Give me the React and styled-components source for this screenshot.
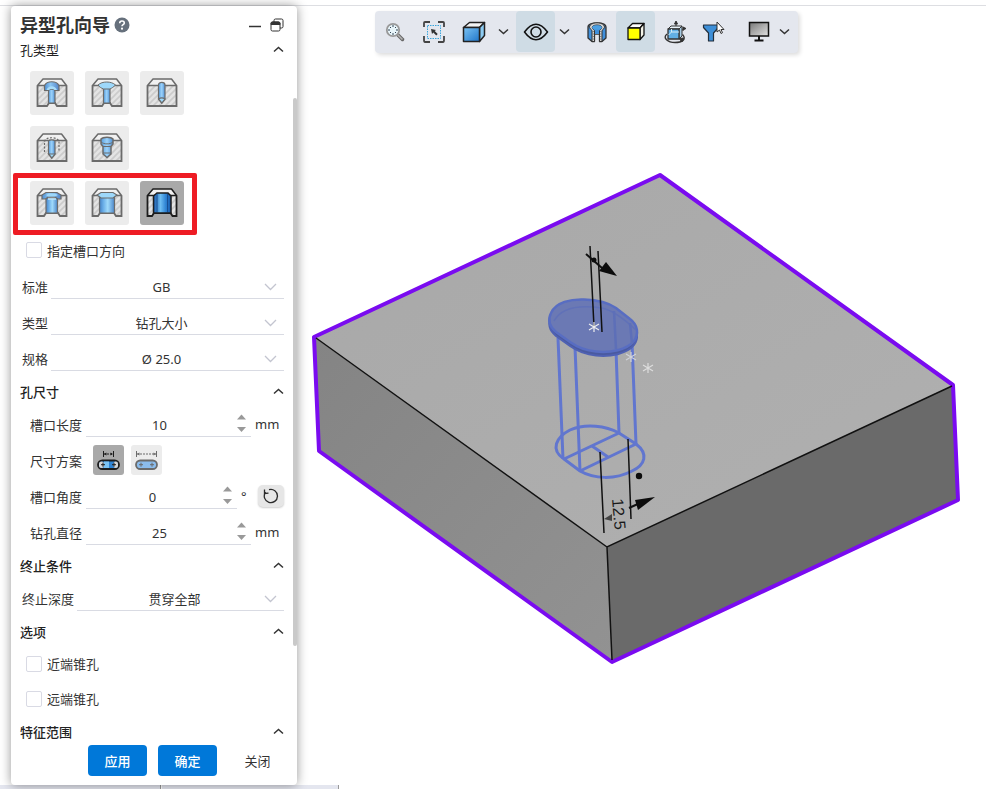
import React, { useState } from "react";
import styled, { createGlobalStyle, css } from "styled-components";

const GlobalStyle = createGlobalStyle`
  *, *::before, *::after { box-sizing: border-box; }
  body { margin: 0; background: #fff; }
  body, button, input, select {
    font-family: "Noto Sans", "Noto Sans CJK SC", sans-serif;
    font-size: 13px;
    color: #333;
  }
  button { border: 0; padding: 0; background: none; cursor: pointer; }
`;

const Screen = styled.div`
  display: flex;
  flex-direction: column;
  height: 100vh;
  overflow: hidden;
`;
const TopEdge = styled.div`
  flex: none;
  height: 6px;
  border-bottom: 1px solid #dddee2;
`;
const Workspace = styled.div`
  display: flex;
  flex: 1;
  min-height: 0;
`;
const BottomTabs = styled.div`
  flex: none;
  display: flex;
  gap: 1px;
  height: 4px;
`;
const BottomTab = styled.div`
  width: ${(p) => (p.$wide ? 177 : 161)}px;
  background: #e4e6ef;
  border-right: 1px solid #999;
`;

const Panel = styled.aside`
  position: relative;
  z-index: 1;
  flex: none;
  display: flex;
  flex-direction: column;
  width: 286px;
  margin-left: 11px;
  background: #fff;
  border-radius: 4px;
  box-shadow: 0 0 11px rgba(0, 0, 0, 0.42);
`;
const TitleBar = styled.header`
  display: flex;
  align-items: center;
  gap: 4px;
  height: 30px;
  padding: 8px 12px 0 9px;
`;
const Title = styled.h1`
  margin: 0;
  font-size: 18px;
  line-height: 22px;
  font-weight: 700;
`;
const TitleButton = styled.button`
  display: flex;
  align-items: center;
  justify-content: center;
  width: 16px;
  height: 16px;
`;
const WindowButtons = styled.div`
  display: flex;
  gap: 6px;
  margin-left: auto;
`;
const PanelBody = styled.div`
  flex: 1;
  min-height: 0;
  overflow: auto;
  scrollbar-width: none;
`;
const ScrollThumb = styled.div`
  position: absolute;
  top: 92px;
  right: 0;
  bottom: 139px;
  width: 4px;
  border-radius: 2px;
  background: #c9c9c9;
`;
const SectionHead = styled.button`
  display: flex;
  align-items: center;
  justify-content: space-between;
  width: 100%;
  height: ${(p) => (p.$first ? 28 : 30)}px;
  padding: 0 13px ${(p) => (p.$first ? 2 : 0)}px 9px;
  font-weight: ${(p) => (p.$first ? 400 : 500)};
  color: #222;
  svg { margin-top: 2px; }
`;
const HoleGrid = styled.div`
  display: flex;
  flex-direction: column;
  align-items: flex-start;
  gap: 11px;
  padding: 7px 0 7px 19px;
`;
const HoleRow = styled.div`
  position: relative;
  display: flex;
  gap: 11px;
  ${(p) =>
    p.$marked &&
    css`
      &::after {
        content: "";
        position: absolute;
        inset: -8px -13px -10px -17px;
        border: 5px solid #ee1c24;
        border-radius: 2px;
        pointer-events: none;
      }
    `}
`;
const IconButton = styled.button`
  display: flex;
  align-items: center;
  justify-content: center;
  width: ${(p) => (p.$small ? 31 : 44)}px;
  height: ${(p) => (p.$small ? 30 : 44)}px;
  border-radius: 3px;
  background: ${(p) => (p.$active ? "#a9a9a9" : "#ececec")};
`;
const CheckLabel = styled.label`
  display: flex;
  align-items: center;
  gap: 5px;
  height: ${(p) => (p.$tall ? 36 : 35)}px;
  padding-left: 15px;
`;
const CheckBox = styled.input`
  appearance: none;
  width: 16px;
  height: 16px;
  margin: 0;
  border: 1px solid #d9dae4;
  border-radius: 2px;
  background: #fff;
  &:checked { background: #0078d9; }
`;
const Row = styled.div`
  display: flex;
  align-items: center;
  gap: ${(p) => (p.$indent ? 4 : 3)}px;
  height: 36px;
  padding: 0 13px 0 ${(p) => (p.$indent ? 19 : 11)}px;
`;
const RowLabel = styled.label`
  flex: none;
`;
const Field = styled.div`
  position: relative;
  flex: 1;
  min-width: 0;
  height: 24px;
  margin-top: 2px;
  border-bottom: 1px solid #d9dbe3;
`;
const Select = styled.select`
  appearance: none;
  width: 100%;
  height: 23px;
  padding: 0 12px 0 0;
  border: 0;
  background: transparent;
  text-align: center;
  text-align-last: center;
`;
const SelectArrow = styled.svg`
  position: absolute;
  right: 7px;
  top: 8px;
  pointer-events: none;
`;
const NumberInput = styled.input`
  width: 100%;
  height: 23px;
  padding: 0 18px 0 0;
  border: 0;
  background: transparent;
  text-align: center;
  outline: 0;
`;
const Spinner = styled.div`
  position: absolute;
  right: 5px;
  top: 1px;
  display: flex;
  flex-direction: column;
  gap: 7px;
`;
const SpinButton = styled.button`
  display: block;
  width: 9px;
  height: 6px;
  svg { display: block; }
`;
const Unit = styled.span`
  flex: none;
  width: ${(p) => (p.$narrow ? 13 : 29)}px;
`;
const ResetButton = styled.button`
  display: flex;
  align-items: center;
  justify-content: center;
  width: 26px;
  height: 22px;
  border-radius: 5px;
  background: #e6e6e6;
  box-shadow: 0 1px 2px rgba(0, 0, 0, 0.2);
`;
const SchemeButtons = styled.div`
  display: flex;
  gap: 7px;
  padding-left: 7px;
`;
const Footer = styled.footer`
  flex: none;
  display: flex;
  justify-content: flex-end;
  gap: 11px;
  height: 41px;
  padding: 1px 10px 9px;
`;
const FooterButton = styled.button`
  width: 59px;
  height: 31px;
  border-radius: 4px;
  ${(p) =>
    p.$primary &&
    css`
      background: #0078d9;
      color: #fff;
      font-weight: 500;
    `}
`;

const Viewport = styled.main`
  flex: 1;
  min-width: 0;
  display: flex;
  flex-direction: column;
  align-items: flex-start;
`;
const Toolbar = styled.div`
  flex: none;
  display: flex;
  margin: 5px 0 0 78px;
  padding-right: 1px;
  height: 42px;
  border-radius: 4px;
  background: #e4e7ee;
  box-shadow: 2px 2px 4px rgba(0, 0, 0, 0.14);
`;
const ToolButton = styled.button`
  display: flex;
  align-items: center;
  justify-content: center;
  width: ${(p) => p.$width || 39}px;
  height: 41px;
  border-radius: 4px;
  background: ${(p) => (p.$active ? "#cfdce5" : "transparent")};
`;
const MenuButton = styled(ToolButton)`
  width: 22px;
  padding-right: 3px;
`;
const ToolGap = styled.span`
  width: 9px;
`;
const ModelCanvas = styled.svg`
  display: block;
  width: 100%;
  flex: 1;
  min-height: 0;
`;

function Chevron({ up, color = "#333", w = 10 }) {
  const h = w / 2;
  return (
    <svg width={w + 2} height={h + 3} fill="none" stroke={color} strokeWidth="1.5">
      <path d={up ? `M1 ${h + 1}L${h + 1} 1.5L${w + 1} ${h + 1}` : `M1 1.5L${h + 1} ${h + 1}L${w + 1} 1.5`} />
    </svg>
  );
}

const holeCuts = {
  cbore: (
    <>
      <path d="M12.500 12h6.500v14h-6.500z" fill="url(#blue)" strokeWidth="1.200" />
      <path d="M8.500 13.500V8.500C11 3.500 20.500 3.500 23 8.500v5h-4c-1-2-5.500-2-6.500 0z" fill="url(#blueWide)" strokeWidth="1.200" />
      <path d="M10.500 13c2-5 8.500-5 10.500 0h-2.500c-1-1.500-4.500-1.500-5.500 0z" fill="#a8dcf8" stroke="none" />
    </>
  ),
  csink: (
    <>
      <path d="M12.500 11h6.500v15h-6.500z" fill="url(#blue)" strokeWidth="1.200" />
      <path d="M7 8c4-4 13.500-4 17.500 0-2 2-3.500 3-5.500 4h-6.500C10 11 8.500 10 7 8z" fill="#9ed8fa" strokeWidth="1" />
    </>
  ),
  drill: (
    <>
      <path d="M12.500 22V8c0-3.500 6.500-3.500 6.500 0v14l-3.200 4z" fill="url(#blue)" strokeWidth="1.200" />
      <path d="M12.500 22c2-1.500 4.500-1.500 6.500 0l-3.200 4z" fill="#9ed8fa" strokeWidth="1.200" />
    </>
  ),
  tap: (
    <>
      <path d="M8.500 20V9.500c1-5 13.500-5 14.500 0V20" fill="none" strokeDasharray="2 1.500" strokeWidth="1.200" />
      <path d="M12.500 22V9c1-1.500 5.500-1.500 6.500 0v13l-3.200 4z" fill="url(#blue)" strokeWidth="1.200" />
      <path d="M12.500 22H19l-3.200 4z" fill="#9ed8fa" strokeWidth="1.200" />
    </>
  ),
  step: (
    <>
      <path d="M10 7c2-2.500 10-2.500 12 0v5l-2 2.500V22l-4 3.500-4-3.500v-7.500L10 12z" fill="url(#blue)" />
      <path d="M10 10c3 2.500 9 2.500 12 0M12 14.500h8M12 21h8" fill="none" strokeWidth="1" />
    </>
  ),
  slotCbore: (
    <>
      <path d="M10 11h11.500v15H10z" fill="url(#blueSlot)" strokeWidth="1.200" />
      <path d="M6 8l4-2.500h11L25 8v4h-3l-3-2h-7l-2.500 2H6z" fill="url(#blueWide)" strokeWidth="1.200" />
      <path d="M10 8l3-1.500h6L22 8l-3 1.500h-7z" fill="#9ed8fa" stroke="none" />
      <path d="M12 12h8" stroke="#bfe6fb" strokeWidth="1.500" />
    </>
  ),
  slotCsink: (
    <>
      <path d="M8.500 10h15v16h-15z" fill="url(#blueSlot)" strokeWidth="1.200" />
      <path d="M6 8l4-2.500h12L26 8l-4 3H10z" fill="#9ed8fa" strokeWidth="1.100" />
    </>
  ),
  slot: (
    <>
      <path d="M7.500 9l3.500-3h11l3 3v17h-17.500z" fill="url(#blueDeep)" />
      <path d="M11 7v18M21.500 7v18" stroke="#174f94" strokeWidth="1" />
    </>
  ),
};
const holeBottoms = {
  cbore: "M1.500 8.500V29H11l2-3h6l2 3h9.500V8.500",
  csink: "M1.500 8.500V29H11l2-3h6l2 3h9.500V8.500",
  slotCbore: "M1.500 8.500V29H8l2-3h12l2 3h6.500V8.500",
  slotCsink: "M1.500 8.500V29H7l2-3h14l2 3h5.500V8.500",
  slot: "M1.500 8.500V29H6l2-3h16.500l2 3h4V8.500",
};

function HoleIcon({ kind, active }) {
  const line = active ? "#1d1d1d" : "#6b6b6b";
  const body = holeBottoms[kind] || "M1.500 8.500V29h29V8.500";
  return (
    <svg width="32" height="32" viewBox="0 0 32 32" stroke={line} strokeWidth="1.500">
      <path d={body + "z"} fill="url(#hatch)" stroke="none" />
      <path d="M1.500 8.500L7 2h18.500l5 6.500z" fill="#f1f1f1" strokeLinejoin="round" />
      <path d="M1.500 8.500h29" strokeWidth="1" />
      <path d={body} fill="none" strokeWidth="1.800" />
      {holeCuts[kind]}
    </svg>
  );
}

function SharedPaint() {
  return (
    <svg width="0" height="0" display="block" aria-hidden="true">
      <defs>
        <linearGradient id="blue"><stop stopColor="#5aa0e0" /><stop offset=".5" stopColor="#9cd2fa" /><stop offset="1" stopColor="#4c8fd4" /></linearGradient>
        <linearGradient id="blueWide"><stop stopColor="#4f8fd2" /><stop offset=".4" stopColor="#8cc6f3" /><stop offset="1" stopColor="#5585c8" /></linearGradient>
        <linearGradient id="blueSlot"><stop stopColor="#4581c4" /><stop offset=".25" stopColor="#6aaee8" /><stop offset=".55" stopColor="#a0dafb" /><stop offset="1" stopColor="#4b86c9" /></linearGradient>
        <linearGradient id="blueDeep"><stop stopColor="#1657a8" /><stop offset=".4" stopColor="#6dbdf2" /><stop offset=".7" stopColor="#2f84d4" /><stop offset="1" stopColor="#1657a8" /></linearGradient>
        <linearGradient id="cubeBlue" x2="1" y2="1"><stop stopColor="#7cc4f4" /><stop offset="1" stopColor="#1f75c9" /></linearGradient>
        <linearGradient id="screenGrey" x2="1" y2="1"><stop stopColor="#777" /><stop offset="1" stopColor="#e2e2e2" /></linearGradient>
        <pattern id="hatch" width="6" height="6" patternUnits="userSpaceOnUse">
          <rect width="6" height="6" fill="#e4e4e4" />
          <path d="M-1 7L7-1M-1 1L1-1M5 7L7 5" stroke="#cbcbcb" strokeWidth="1.600" />
        </pattern>
      </defs>
    </svg>
  );
}

function SchemeIcon({ wide, active }) {
  const c = active ? "#1d1d1d" : "#6b6b6b";
  const a = wide ? 1 : 6;
  const b = wide ? 22 : 17;
  return (
    <svg width="23" height="20" viewBox="0 0 23 20" fill="none" stroke={c}>
      <path d={`M${a + 0.5} 1v6M${b - 0.5} 1v6`} />
      <path d={`M${a + 1} 4H${b - 1}`} strokeDasharray="2 1" />
      <path d={`M${a + 1} 4l2.500-1.500v3zM${b - 1} 4l-2.500-1.500v3z`} fill={c} stroke="none" />
      <rect x="1" y="10.500" width="21" height="8.500" rx="4.250" fill={active ? "#2f84d4" : "#8bbcec"} strokeWidth="1.800" />
      {active && <rect x="2" y="11.500" width="5" height="6.500" rx="2.500" fill="#d5d5d5" stroke="none" />}
      {active && <rect x="7" y="11.500" width="5" height="6.500" fill="#7cc4f4" stroke="none" />}
      {active && <rect x="16.500" y="11.500" width="4.500" height="6.500" rx="2.200" fill="#d5d5d5" stroke="none" />}
      <path d="M4 14.700h4M6 12.700v4M15 14.700h4M17 12.700v4" />
    </svg>
  );
}

function HelpIcon() {
  return (
    <svg width="16" height="16" viewBox="0 0 16 16">
      <circle cx="8" cy="8" r="7.500" fill="#66707c" />
      <path d="M5.700 6.200C5.700 3.300 10.300 3.300 10.300 6c0 1.700-2.300 1.700-2.300 3.300" fill="none" stroke="#fff" strokeWidth="1.600" />
      <circle cx="8" cy="11.700" r="1.100" fill="#fff" />
    </svg>
  );
}
const MinimizeIcon = () => (
  <svg width="14" height="16"><path d="M1 9.500h12" stroke="#333" strokeWidth="1.500" /></svg>
);
const RestoreIcon = () => (
  <svg width="14" height="14" viewBox="0 0 14 14" fill="none" stroke="#333">
    <path d="M4 4V2.500Q4 1 5.500 1h6Q13 1 13 2.500v6Q13 10 11.500 10H10" />
    <rect x="1" y="4" width="9" height="9" rx="1.500" fill="#fff" />
    <path d="M1 6.500V5.500Q1 4 2.500 4h6Q10 4 10 5.500v1z" fill="#333" />
  </svg>
);
const ResetIcon = () => (
  <svg width="16" height="16" viewBox="0 0 16 16" fill="none" stroke="#2a2a2a" strokeWidth="1.300">
    <path d="M2.500 4.200A6.600 6.600 0 1 0 6 1.700" />
    <path d="M1.500 1.500v4l4-.3" />
  </svg>
);

const ZoomIcon = () => (
  <svg width="20" height="20" viewBox="0 0 20 20" fill="none">
    <path d="M12.500 12.500l5 5" stroke="#666" strokeWidth="3.500" strokeLinecap="round" />
    <path d="M12.500 12.500l5 5" stroke="#b5b5b5" strokeWidth="1.500" />
    <circle cx="8" cy="8" r="6.200" fill="#e8f5fa" stroke="#999" strokeWidth="1.800" />
    <path d="M8 3v2M8 11v2M3 8h2M11 8h2M5 5l1 1M10 10l1 1M11 5l-1 1M6 10l-1 1" stroke="#345" />
  </svg>
);
const FitIcon = () => (
  <svg width="24" height="24" viewBox="0 0 24 24" fill="none">
    <path d="M2 7V3Q2 2 3 2h5M16 2h5q1 0 1 1v4M22 16v4q0 2-1 2h-5M8 22H3q-1 0-1-2v-4" stroke="#444" strokeWidth="1.800" />
    <rect x="5.500" y="5.500" width="13" height="13" stroke="#38a5dc" strokeDasharray="1.500 1" />
    <path d="M9 9l1 5 1.300-1.500 3 3 1.400-1.400-3-3L14 10z" fill="#333" />
  </svg>
);
const CubeIcon = () => (
  <svg width="24" height="22" viewBox="0 0 24 22" stroke="#222" strokeWidth="1.500" strokeLinejoin="round">
    <path d="M1.500 6.500l6-5h15l-5 5z" fill="#f4f4f4" />
    <path d="M17.500 6.500l5-5v13l-5 6z" fill="#8ccbf2" />
    <path d="M1.500 6.500h16v14h-16z" fill="url(#cubeBlue)" />
  </svg>
);
const EyeIcon = () => (
  <svg width="26" height="20" viewBox="0 0 26 20" fill="none" stroke="#111" strokeWidth="1.600">
    <path d="M1.500 10Q13-5.500 24.500 10 13 25.500 1.500 10z" strokeLinejoin="round" />
    <circle cx="13" cy="10" r="5" />
  </svg>
);
const SectionIcon = () => (
  <svg width="20" height="22" viewBox="0 0 20 22" stroke="#333" strokeLinejoin="round">
    <path d="M1 6C1 .500 19 .500 19 6v11l-4 3.500h-2.500V13h-5v7.500H5L1 17z" fill="#3f8fdb" strokeWidth="1.300" />
    <path d="M5 20.500V9.500C-1 5 5 1.800 10 1.800S21 5 15 9.500v11h-2.500v-11C17 6 14 4 10 4S3 6 7.500 9.500v11z" fill="#d3d3d3" strokeWidth="1" />
    <ellipse cx="10" cy="6.500" rx="4.800" ry="2.300" fill="#4aa0e4" stroke="none" />
    <path d="M8 10h4v3H8z" fill="#3f8fdb" stroke="none" />
    <path d="M6.200 10v9.500M13.800 10v9.500" stroke="#666" strokeDasharray="1 1.500" />
  </svg>
);
const YellowCubeIcon = () => (
  <svg width="18" height="19" viewBox="0 0 18 19" stroke="#111" strokeWidth="1.300" strokeLinejoin="round">
    <path d="M1 6l4.500-4.500H17L13 6z" fill="#fdfdfd" />
    <path d="M13 6l4-4.500v11.500l-4 4.500z" fill="#f4f4e8" />
    <path d="M1 6h12v11.500H1z" fill="#ffff00" />
  </svg>
);
const RotateIcon = () => (
  <svg width="24" height="24" viewBox="0 0 24 24" stroke="#333" strokeLinejoin="round">
    <path d="M4 14C-1 18 5 22.500 12 22.500s12-3 7.500-8" fill="none" strokeWidth="1.400" />
    <path d="M16 18.500l4.500-.5-1.500 4z" fill="#333" />
    <path d="M13 7V2M18 10h3" fill="none" />
    <path d="M11.500 4L13 1l1.500 3zM20 7l3 1.500-3 1.500z" fill="#333" />
    <path d="M5 9l3-3h11l-3 3z" fill="#e8f2f8" />
    <path d="M16 9l3-3v10l-3 3z" fill="#a7cbe3" />
    <path d="M5 9h11v10H5z" fill="#62afe4" strokeWidth="1.300" />
    <path d="M5.500 15l3-3H16M8.500 9v3" fill="none" stroke="#d6edf8" />
  </svg>
);
const FilterIcon = () => (
  <svg width="23" height="22" viewBox="0 0 23 22" strokeLinejoin="round">
    <path d="M1.500 4h15v2.500L11.500 12v8h-5v-8l-5-5.500z" fill="#3d8fd8" stroke="#222f3c" strokeWidth="1.200" />
    <path d="M15 1v10l2.500-2 1.500 3.500 1.500-.8L19 8.500h3z" fill="#fff" stroke="#333" />
  </svg>
);
const MonitorIcon = () => (
  <svg width="22" height="21" viewBox="0 0 22 21">
    <rect x="1.500" y="1.500" width="19" height="13.500" fill="url(#screenGrey)" stroke="#111" strokeWidth="1.500" />
    <path d="M11 15v4M6.500 19.500h9" stroke="#111" strokeWidth="2" />
  </svg>
);

function Section({ title, first, children }) {
  const [open, setOpen] = useState(true);
  return (
    <section>
      <SectionHead type="button" $first={first} aria-expanded={open} onClick={() => setOpen(!open)}>
        {title}
        <Chevron up={open} w={9} />
      </SectionHead>
      {open && children}
    </section>
  );
}

function SelectRow({ id, label, value }) {
  return (
    <Row>
      <RowLabel htmlFor={id}>{label}</RowLabel>
      <Field>
        <Select id={id} defaultValue={value}>
          <option>{value}</option>
        </Select>
        <SelectArrow width="13" height="8" fill="none" stroke="#c3c5d0" strokeWidth="1.300">
          <path d="M1 1l5.500 5.500L12 1" />
        </SelectArrow>
      </Field>
    </Row>
  );
}

function NumberRow({ id, label, initial, unit, narrow, children }) {
  const [value, setValue] = useState(initial);
  return (
    <Row $indent>
      <RowLabel htmlFor={id}>{label}</RowLabel>
      <Field>
        <NumberInput id={id} inputMode="decimal" value={value} onChange={(e) => setValue(e.target.value)} />
        <Spinner>
          <SpinButton type="button" aria-label="+" onClick={() => setValue(String(Number(value) + 1))}>
            <svg width="9" height="6"><path d="M0 5.500l4.500-5 4.500 5z" fill="#999" /></svg>
          </SpinButton>
          <SpinButton type="button" aria-label="-" onClick={() => setValue(String(Number(value) - 1))}>
            <svg width="9" height="6"><path d="M0 0h9L4.500 5z" fill="#999" /></svg>
          </SpinButton>
        </Spinner>
      </Field>
      <Unit $narrow={narrow}>{unit}</Unit>
      {children}
    </Row>
  );
}

function CheckRow({ tall, children }) {
  return (
    <CheckLabel $tall={tall}>
      <CheckBox type="checkbox" />
      {children}
    </CheckLabel>
  );
}

const holeRows = [["cbore", "csink", "drill"], ["tap", "step"], ["slotCbore", "slotCsink", "slot"]];

function HolePicker() {
  const [picked, setPicked] = useState("slot");
  return (
    <HoleGrid>
      {holeRows.map((row, i) => (
        <HoleRow key={i} $marked={i === 2}>
          {row.map((kind) => (
            <IconButton key={kind} type="button" aria-label={kind} $active={kind === picked} onClick={() => setPicked(kind)}>
              <HoleIcon kind={kind} active={kind === picked} />
            </IconButton>
          ))}
        </HoleRow>
      ))}
    </HoleGrid>
  );
}

const Star = ({ x, y, color }) => (
  <path
    d={`M${x} ${y - 5}v10M${x - 5} ${y - 3}l10 6M${x + 5} ${y - 3}l-10 6`}
    stroke={color}
    strokeWidth="1.200"
    fill="none"
  />
);

function Model() {
  const slotTop =
    "M551 313C556 302 571 299 584 299.500C599 300 609 303 616 308L630 319C638 325 639 334 634 341C627 350 610 353 596 351.500C585 350.500 577 347 570 342L556 332C549 326 548 319 551 313z";
  return (
    <ModelCanvas viewBox="297 53 689 732" preserveAspectRatio="xMinYMin meet" role="img">
      <defs>
        <linearGradient id="topFace" x2="1" y2="1"><stop stopColor="#a8a8a8" /><stop offset="1" stopColor="#b0b0b0" /></linearGradient>
        <linearGradient id="leftFace" x2="1" y2="1"><stop stopColor="#848484" /><stop offset="1" stopColor="#929292" /></linearGradient>
      </defs>
      <path d="M660 175L953 385L607 547L314 337z" fill="url(#topFace)" />
      <path d="M314 337L607 547L612 662L319 451z" fill="url(#leftFace)" />
      <path d="M607 547L953 385L958 500L612 662z" fill="#6a6a6a" />
      <path d="M660 175L953 385L958 500L612 662L319 451L314 337z" fill="none" stroke="#7a0bf0" strokeWidth="4" strokeLinejoin="round" />
      <path d="M316 338L607 547L952 386M607 547L612 660" fill="none" stroke="#111" strokeWidth="1.500" />
      <g fill="none" stroke="#6176cf" strokeWidth="3">
        <path d="M558 338L563 459M575 347L580 471M616 350L619 433M632 342L636 444" />
        <path d="M564 459C550 450 556 437 570 430C586 423 606 426 619 433L636 444C649 454 645 465 632 471C615 480 594 479 580 471zM564 459L619 433M580 471L636 444M592 446L608 457" />
      </g>
      <path d={slotTop} transform="translate(0 4)" fill="#4a5aa0" stroke="#4f61b3" strokeWidth="2" />
      <path d={slotTop} fill="#6b79b4" stroke="#586dc2" strokeWidth="2.500" />
      <path d="M554 321C562 306 582 305 602 308C612 310 622 317 636 330" fill="none" stroke="#6071b8" strokeWidth="1.500" />
      <path d="M614 311L616 349M630 323L632 344" stroke="#5d6fb8" strokeWidth="2.500" />
      <g stroke="#111" strokeWidth="1.500" fill="none">
        <path d="M590 246L594 327M598 251L602 332M600 452L604 533M628 439L631 519" />
        <path d="M586 254L602 268M629 508L640 503" strokeWidth="2" />
      </g>
      <g fill="#0c0c0c">
        <path d="M606 262L617 276L599 271z" />
        <circle cx="594" cy="260" r="2.500" />
        <path d="M655 497L635 500L638 510z" />
        <circle cx="639" cy="476" r="3.200" />
      </g>
      <path d="M604 519L612 514v7z" fill="#444" />
      <Star x={594} y={327} color="#eee" />
      <Star x={631} y={357} color="#d0d2da" />
      <Star x={648} y={368} color="#ddd" />
      <text transform="translate(612 499) rotate(85)" fontFamily="Liberation Sans, sans-serif" fontSize="16" fill="#1a1a1a">12.5</text>
    </ModelCanvas>
  );
}

export default function App() {
  const [scheme, setScheme] = useState("inner");
  return (
    <Screen>
      <GlobalStyle />
      <SharedPaint />
      <TopEdge />
      <Workspace>
        <Panel>
          <TitleBar>
            <Title>异型孔向导</Title>
            <TitleButton type="button" aria-label="help"><HelpIcon /></TitleButton>
            <WindowButtons>
              <TitleButton type="button" aria-label="minimize"><MinimizeIcon /></TitleButton>
              <TitleButton type="button" aria-label="restore"><RestoreIcon /></TitleButton>
            </WindowButtons>
          </TitleBar>
          <PanelBody>
            <Section title="孔类型" first>
              <HolePicker />
              <CheckRow tall>指定槽口方向</CheckRow>
              <SelectRow id="standard" label="标准" value="GB" />
              <SelectRow id="type" label="类型" value="钻孔大小" />
              <SelectRow id="size" label="规格" value="Ø 25.0" />
            </Section>
            <Section title="孔尺寸">
              <NumberRow id="length" label="槽口长度" initial="10" unit="mm" />
              <Row $indent>
                <RowLabel as="span">尺寸方案</RowLabel>
                <SchemeButtons>
                  <IconButton type="button" aria-label="inner" $small $active={scheme === "inner"} onClick={() => setScheme("inner")}>
                    <SchemeIcon active={scheme === "inner"} />
                  </IconButton>
                  <IconButton type="button" aria-label="outer" $small $active={scheme === "outer"} onClick={() => setScheme("outer")}>
                    <SchemeIcon wide active={scheme === "outer"} />
                  </IconButton>
                </SchemeButtons>
              </Row>
              <NumberRow id="angle" label="槽口角度" initial="0" unit="°" narrow>
                <ResetButton type="button" aria-label="reset"><ResetIcon /></ResetButton>
              </NumberRow>
              <NumberRow id="diameter" label="钻孔直径" initial="25" unit="mm" />
            </Section>
            <Section title="终止条件">
              <SelectRow id="depth" label="终止深度" value="贯穿全部" />
            </Section>
            <Section title="选项">
              <CheckRow>近端锥孔</CheckRow>
              <CheckRow>远端锥孔</CheckRow>
            </Section>
            <Section title="特征范围" />
          </PanelBody>
          <ScrollThumb />
          <Footer>
            <FooterButton type="button" $primary>应用</FooterButton>
            <FooterButton type="button" $primary>确定</FooterButton>
            <FooterButton type="button">关闭</FooterButton>
          </Footer>
        </Panel>
        <Viewport>
          <Toolbar role="toolbar">
            <ToolButton type="button" aria-label="zoom"><ZoomIcon /></ToolButton>
            <ToolButton type="button" aria-label="fit"><FitIcon /></ToolButton>
            <ToolButton type="button" aria-label="view" $width={41}><CubeIcon /></ToolButton>
            <MenuButton type="button" aria-label="view menu"><Chevron w={9} /></MenuButton>
            <ToolButton type="button" aria-label="visibility" $active><EyeIcon /></ToolButton>
            <MenuButton type="button" aria-label="visibility menu"><Chevron w={9} /></MenuButton>
            <ToolButton type="button" aria-label="section"><SectionIcon /></ToolButton>
            <ToolButton type="button" aria-label="shading" $active><YellowCubeIcon /></ToolButton>
            <ToolButton type="button" aria-label="rotate"><RotateIcon /></ToolButton>
            <ToolButton type="button" aria-label="filter"><FilterIcon /></ToolButton>
            <ToolGap />
            <ToolButton type="button" aria-label="display" $width={33}><MonitorIcon /></ToolButton>
            <MenuButton type="button" aria-label="display menu"><Chevron w={9} /></MenuButton>
          </Toolbar>
          <Model />
        </Viewport>
      </Workspace>
      <BottomTabs>
        <BottomTab />
        <BottomTab $wide />
      </BottomTabs>
    </Screen>
  );
}
